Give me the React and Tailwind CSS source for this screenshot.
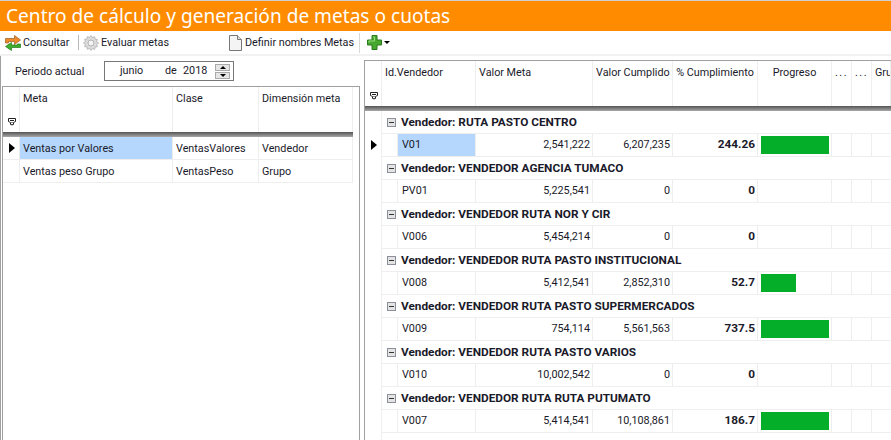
const font = { fontFamily: 'Roboto, "Noto Sans", sans-serif' };

const rightCols = [
  ['Id.Vendedor', 'w-[94px]', 'text-left pl-[3px]'],
  ['Valor Meta', 'w-[117px]', 'text-left pl-[3px]'],
  ['Valor Cumplido', 'w-[80px]', 'text-left pl-[3px]'],
  ['% Cumplimiento', 'w-[85px]', 'text-center'],
  ['Progreso', 'w-[74px]', 'text-center'],
  ['...', 'w-[20px]', 'text-center tracking-[1.5px]'],
  ['...', 'w-[20px]', 'text-center tracking-[1.5px]'],
  ['Gru', 'w-[19px]', 'text-left pl-[3px]'],
];

const vendedores = [
  { group: 'RUTA PASTO CENTRO', id: 'V01', meta: '2,541,222', cumplido: '6,207,235', pct: '244.26', bar: 68, selected: true },
  { group: 'VENDEDOR AGENCIA TUMACO', id: 'PV01', meta: '5,225,541', cumplido: '0', pct: '0', bar: 0 },
  { group: 'VENDEDOR RUTA NOR Y CIR', id: 'V006', meta: '5,454,214', cumplido: '0', pct: '0', bar: 0 },
  { group: 'VENDEDOR RUTA PASTO INSTITUCIONAL', id: 'V008', meta: '5,412,541', cumplido: '2,852,310', pct: '52.7', bar: 35 },
  { group: 'VENDEDOR RUTA PASTO SUPERMERCADOS', id: 'V009', meta: '754,114', cumplido: '5,561,563', pct: '737.5', bar: 68 },
  { group: 'VENDEDOR RUTA PASTO VARIOS', id: 'V010', meta: '10,002,542', cumplido: '0', pct: '0', bar: 0 },
  { group: 'VENDEDOR RUTA RUTA PUTUMATO', id: 'V007', meta: '5,414,541', cumplido: '10,108,861', pct: '186.7', bar: 68 },
];

function FilterIcon() {
  return (
    <svg width="8" height="8" viewBox="0 0 8 8" className="block">
      <path d="M0.5 0.5h7v3l-2 1v2h-1v0.5h-1v-0.5h-1v-2l-2-1z" fill="#fff" stroke="#222" strokeWidth="1" />
      <path d="M2 2.5h4M3.5 4.5h1" stroke="#222" strokeWidth="1" />
    </svg>
  );
}

function RowArrow() {
  return (
    <svg width="6" height="10" viewBox="0 0 6 10" className="block">
      <path d="M0 0l6 5-6 5z" fill="#000" />
    </svg>
  );
}

function ConsultarIcon() {
  return (
    <svg width="16" height="16" viewBox="0 0 16 16" className="block">
      <path d="M0.5 8V3.5h9V0.5L15.5 5 9.5 9.5V6.5H3.5V8z" fill="#ee8a2c" stroke="#9c5a20" strokeWidth="0.7" />
      <path d="M15.5 9v3.5h-9v3L0.5 11.5 6.5 7.5v2.5h6V9z" fill="#3fae2e" stroke="#23791a" strokeWidth="0.7" />
    </svg>
  );
}

function GearIcon() {
  return (
    <svg width="16" height="16" viewBox="0 0 16 16" className="block">
      <path d="M8 0.5l1.4 2 2.3-.8.3 2.4 2.4.3-.8 2.3 2 1.3-2 1.4.8 2.3-2.4.3-.3 2.4-2.3-.8L8 15.5l-1.4-2-2.3.8-.3-2.4-2.4-.3.8-2.3-2-1.3 2-1.4-.8-2.3 2.4-.3.3-2.4 2.3.8z" fill="#dcdcdc" stroke="#a6a6a6" strokeWidth="0.7" />
      <circle cx="8" cy="8" r="3" fill="#f4f4f4" stroke="#a6a6a6" strokeWidth="0.8" />
    </svg>
  );
}

function PageIcon() {
  return (
    <svg width="13" height="16" viewBox="0 0 13 16" className="block">
      <path d="M0.5 0.5h8l4 4v11h-12z" fill="#f4f4f4" stroke="#777" strokeWidth="1" />
      <path d="M8.5 0.5v4h4" fill="#ddd" stroke="#777" strokeWidth="1" />
    </svg>
  );
}

function PlusIcon() {
  return (
    <svg width="15" height="15" viewBox="0 0 15 15" className="block">
      <path d="M5 0.5h5v4.5h4.5v5H10v4.5H5V10H0.5V5H5z" fill="#46a82e" stroke="#2b7a1c" strokeWidth="1" />
      <path d="M6 2h1.5v4H2v1.5" fill="none" stroke="#9bdc83" strokeWidth="1" />
    </svg>
  );
}

function CollapseBox() {
  return (
    <div className="w-[9px] h-[9px] border border-[#8a8f99] bg-[#e4e4e4] flex items-center justify-center">
      <div className="w-[5px] h-px bg-[#333]" />
    </div>
  );
}

function Toolbar() {
  return (
    <div className="h-[25px] flex items-center border-b-2 border-[#f1f1f1] text-[10.8px] text-[#1a1a2a] shrink-0 whitespace-nowrap">
      <div className="ml-[5px] flex items-center gap-[2px] w-[73px]">
        <ConsultarIcon />
        <span className="pt-[2px]">Consultar</span>
      </div>
      <div className="w-px h-[15px] bg-[#b8b8b8]" />
      <div className="ml-[4px] flex items-center gap-[2px] w-[146px]">
        <GearIcon />
        <span className="pt-[2px]">Evaluar metas</span>
      </div>
      <div className="flex items-center gap-[3px] w-[130px]">
        <PageIcon />
        <span className="pt-[2px]">Definir nombres Metas</span>
      </div>
      <div className="w-px h-[20px] bg-[#d8d8d8]" />
      <div className="ml-[7px] flex items-center gap-[2px]">
        <PlusIcon />
        <div className="border-x-[3px] border-x-transparent border-t-[3px] border-t-black" />
      </div>
    </div>
  );
}

function LeftPane() {
  return (
    <div className="w-[361px] h-full shrink-0 border-l border-[#a0a0a0] flex flex-col text-[10.8px] text-[#1a1a2a]">
      <div className="h-[30px] flex items-center shrink-0">
        <span className="ml-[14px] w-[89px] pt-[2px]">Periodo actual</span>
        <div className="w-[130px] h-[20px] border border-[#777] flex items-center">
          <span className="ml-[15px] w-[23px]">junio</span>
          <span className="ml-[22px] w-[11px]">de</span>
          <span className="ml-[7px] w-[23px]">2018</span>
          <div className="ml-[9px] w-[15px] h-[15px] flex flex-col gap-px">
            <div className="flex-1 bg-[#e6e6e6] border border-[#aaa] flex items-center justify-center">
              <div className="border-x-[3px] border-x-transparent border-b-[3px] border-b-black" />
            </div>
            <div className="flex-1 bg-[#e6e6e6] border border-[#aaa] flex items-center justify-center">
              <div className="border-x-[3px] border-x-transparent border-t-[3px] border-t-black" />
            </div>
          </div>
        </div>
      </div>
      <div className="flex-1 ml-px mr-px border border-[#a0a0a0] border-b-0 flex flex-col">
        <div className="flex h-[45px] shrink-0 w-[350px]">
          <div className="w-[17px] border-r border-[#eeeeee] flex items-end pb-[6px] pl-[5px]"><FilterIcon /></div>
          <div className="w-[153px] border-r border-[#eeeeee] pl-[3px] pt-[4px]">Meta</div>
          <div className="w-[86px] border-r border-[#eeeeee] pl-[3px] pt-[4px]">Clase</div>
          <div className="w-[94px] border-r border-[#eeeeee] pl-[3px] pt-[4px]">Dimensión meta</div>
        </div>
        <div className="h-[5px] w-[350px] shrink-0 bg-gradient-to-b from-[#555] to-[#a8a8a8]" />
        <div className="flex h-[23px] w-[350px] border-b border-[#eeeeee]">
          <div className="w-[17px] border-r border-[#eeeeee] flex items-center pl-[6px]"><RowArrow /></div>
          <div className="w-[153px] border-r border-[#eeeeee] bg-[#b5d7fd] pl-[3px] pt-[2px] flex items-center">Ventas por Valores</div>
          <div className="w-[86px] border-r border-[#eeeeee] pl-[3px] pt-[2px] flex items-center">VentasValores</div>
          <div className="w-[94px] border-r border-[#eeeeee] pl-[3px] pt-[2px] flex items-center">Vendedor</div>
        </div>
        <div className="flex h-[23px] w-[350px] border-b border-[#eeeeee]">
          <div className="w-[17px] border-r border-[#eeeeee]" />
          <div className="w-[153px] border-r border-[#eeeeee] pl-[3px] pt-[2px] flex items-center">Ventas peso Grupo</div>
          <div className="w-[86px] border-r border-[#eeeeee] pl-[3px] pt-[2px] flex items-center">VentasPeso</div>
          <div className="w-[94px] border-r border-[#eeeeee] pl-[3px] pt-[2px] flex items-center">Grupo</div>
        </div>
      </div>
    </div>
  );
}

function VendedorRows({ v }) {
  return (
    <div>
      <div className="h-[23px] flex items-center border-b border-[#eeeeee]">
        <div className="w-[19px] shrink-0 pl-[5px]"><CollapseBox /></div>
        <span className="font-bold text-[11.8px] whitespace-nowrap pt-[2px]">Vendedor: {v.group}</span>
      </div>
      <div className="h-[23px] flex border-b border-[#eeeeee]">
        <div className="w-[16px] shrink-0 border-r border-[#eeeeee]" />
        <div className={`w-[78px] shrink-0 border-r border-[#eeeeee] pl-[4px] flex items-center ${v.selected ? 'bg-[#b5d7fd]' : ''}`}>{v.id}</div>
        <div className="w-[117px] shrink-0 border-r border-[#eeeeee] pr-[2px] flex items-center justify-end">{v.meta}</div>
        <div className="w-[80px] shrink-0 border-r border-[#eeeeee] pr-[2px] flex items-center justify-end">{v.cumplido}</div>
        <div className="w-[85px] shrink-0 border-r border-[#eeeeee] pr-[2px] flex items-center justify-end font-bold text-[11.8px]">{v.pct}</div>
        <div className="w-[74px] shrink-0 border-r border-[#eeeeee] pl-[3px] flex items-center">
          {v.bar > 0 && <div className="h-[18px] bg-[#05ae29]" style={{ width: v.bar }} />}
        </div>
        <div className="w-[20px] shrink-0 border-r border-[#eeeeee]" />
        <div className="w-[20px] shrink-0 border-r border-[#eeeeee]" />
        <div className="w-[19px] shrink-0" />
      </div>
    </div>
  );
}

function RightPane() {
  return (
    <div className="flex-1 min-w-0 h-full pt-[4px] pl-[3px] flex flex-col text-[10.8px] text-[#1a1a2a]">
      <div className="flex-1 border-l border-t border-[#a0a0a0] flex flex-col overflow-hidden">
        <div className="flex h-[45px] shrink-0">
          <div className="w-[17px] shrink-0 border-r border-[#eeeeee] flex items-end pb-[6px] pl-[5px]"><FilterIcon /></div>
          {rightCols.map((c, i) => (
            <div key={i} className={`${c[1]} ${c[2]} shrink-0 border-r border-[#eeeeee] pt-[4px] whitespace-nowrap overflow-hidden`}>{c[0]}</div>
          ))}
        </div>
        <div className="h-[5px] shrink-0 bg-gradient-to-b from-[#555] to-[#a8a8a8]" />
        <div className="flex flex-1">
          <div className="w-[17px] shrink-0 border-r border-[#eeeeee] pt-[29px] pl-[6px]"><RowArrow /></div>
          <div className="flex-1 min-w-0">
            {vendedores.map((v) => <VendedorRows key={v.id} v={v} />)}
          </div>
        </div>
      </div>
    </div>
  );
}

export default function App() {
  return (
    <div className="w-[891px] h-[440px] overflow-hidden bg-white flex flex-col" style={font}>
      <div className="h-px shrink-0 bg-[#d0d0d0]" />
      <div className="h-[30px] shrink-0 bg-[#ff8c00] text-white text-[19.1px] pl-[6px] flex items-center whitespace-nowrap" style={{ fontFamily: '"Noto Sans", sans-serif' }}>
        Centro de cálculo y generación de metas o cuotas
      </div>
      <Toolbar />
      <div className="flex flex-1 min-h-0">
        <LeftPane />
        <RightPane />
      </div>
    </div>
  );
}
